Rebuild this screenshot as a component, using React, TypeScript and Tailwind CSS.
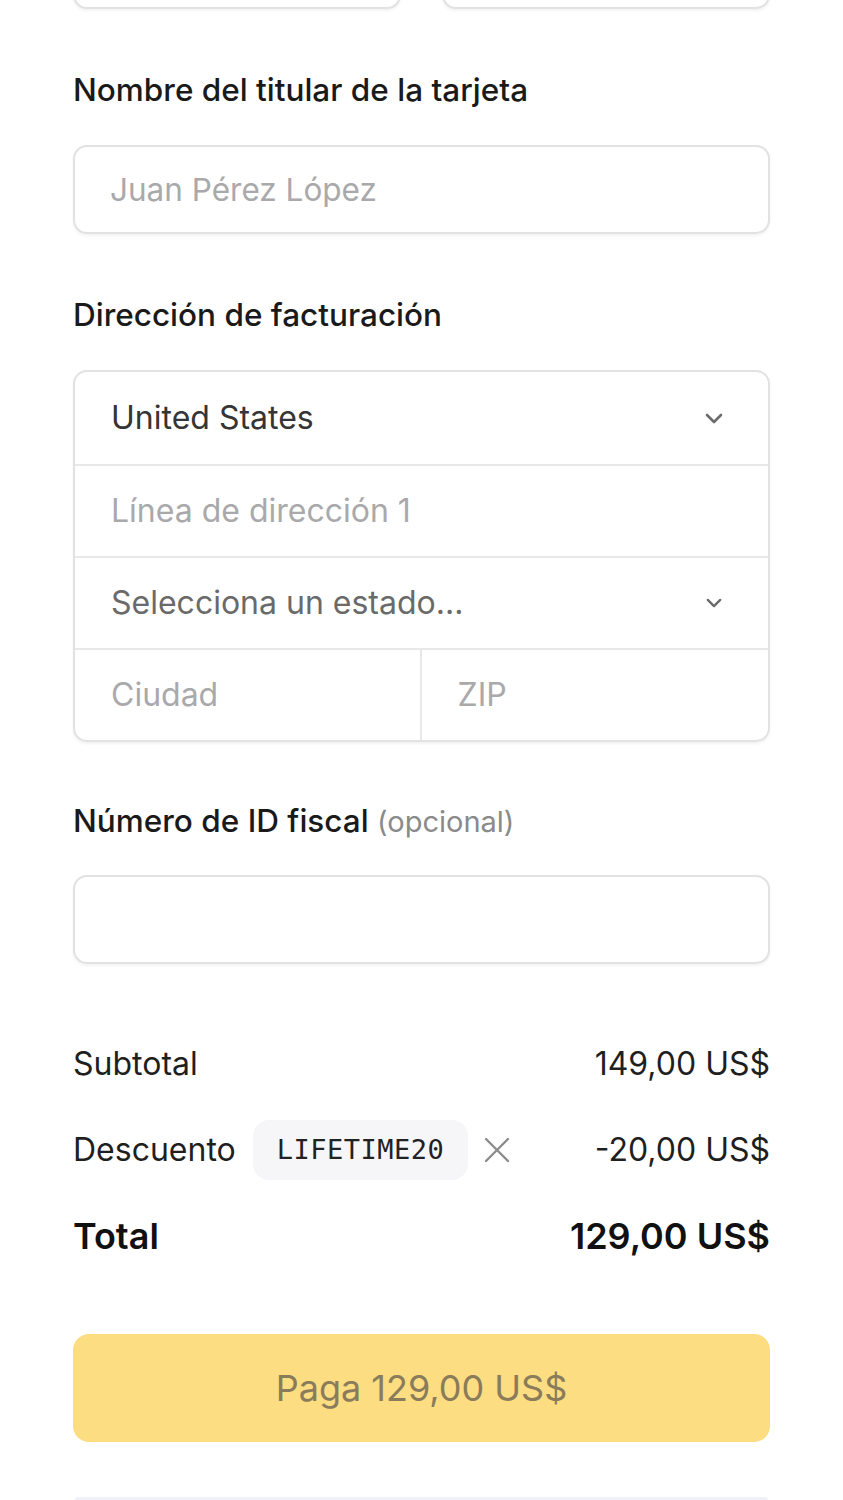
import React from "react";

const Chevron = ({ small }: { small?: boolean }) => (
  <svg
    width={small ? 16 : 18}
    height={small ? 10 : 11}
    viewBox="0 0 18 11"
    fill="none"
    stroke="#6b6b6b"
    strokeWidth={2.6}
    strokeLinecap="round"
    strokeLinejoin="round"
  >
    <path d="M2 2l7 7 7-7" />
  </svg>
);

export default function App() {
  return (
    <div
      className="min-h-[1500px] bg-white overflow-hidden"
      style={{ fontFamily: "Inter, 'Noto Sans', sans-serif" }}
    >
      <div className="mx-[73px]">
        {/* partial inputs at top */}
        <div className="grid grid-cols-2 gap-[41px] -mt-[81px]">
          <div className="h-[90px] rounded-[14px] border-2 border-[#e2e2e2] bg-white shadow-[0_2px_3px_rgba(0,0,0,0.05)]" />
          <div className="h-[90px] rounded-[14px] border-2 border-[#e2e2e2] bg-white shadow-[0_2px_3px_rgba(0,0,0,0.05)]" />
        </div>

        {/* Cardholder name */}
        <div className="mt-[62px] text-[31.5px] leading-[38px] font-medium text-[#1a1a1a]">
          Nombre del titular de la tarjeta
        </div>
        <div className="mt-[36px] h-[89px] rounded-[14px] border-2 border-[#e2e2e2] shadow-[0_2px_3px_rgba(0,0,0,0.05)] flex items-center px-[35px] text-[31.5px] text-[#a9a9ab]">
          Juan Pérez López
        </div>

        {/* Billing address */}
        <div className="mt-[62px] text-[31.5px] leading-[38px] font-medium text-[#1a1a1a]">
          Dirección de facturación
        </div>
        <div className="mt-[36px] rounded-[14px] border-2 border-[#e2e2e2] shadow-[0_2px_3px_rgba(0,0,0,0.05)] overflow-hidden">
          <div className="h-[92px] flex items-center justify-between pl-[36px] pr-[45px] text-[32px] text-[#353535]">
            <span>United States</span>
            <Chevron />
          </div>
          <div className="h-[92px] border-t-2 border-[#e8e8e8] flex items-center pl-[36px] text-[32px] text-[#a9a9ab]">
            Línea de dirección 1
          </div>
          <div className="h-[92px] border-t-2 border-[#e8e8e8] flex items-center justify-between pl-[36px] pr-[46px] text-[32px] text-[#6a6a6a]">
            <span>Selecciona un estado...</span>
            <Chevron small />
          </div>
          <div className="h-[92px] border-t-2 border-[#e8e8e8] grid grid-cols-2 text-[32px] text-[#a9a9ab]">
            <div className="flex items-center pl-[36px] border-r-2 border-[#e8e8e8]">Ciudad</div>
            <div className="flex items-center pl-[36px]">ZIP</div>
          </div>
        </div>

        {/* Tax ID */}
        <div className="mt-[60px] text-[31.5px] leading-[38px] font-medium text-[#1a1a1a]">
          Número de ID fiscal{" "}
          <span className="font-normal text-[#8a8a8a] text-[29px]">(opcional)</span>
        </div>
        <div className="mt-[34px] h-[89px] rounded-[14px] border-2 border-[#e2e2e2] shadow-[0_2px_3px_rgba(0,0,0,0.05)]" />

        {/* Summary */}
        <div className="mt-[81px] flex items-center justify-between text-[32px] leading-[38px] text-[#1f1f1f]">
          <span>Subtotal</span>
          <span>149,00 US$</span>
        </div>
        <div className="mt-[37px] flex items-center justify-between h-[60px] text-[32px] text-[#1f1f1f]">
          <div className="flex items-center">
            <span>Descuento</span>
            <span
              className="ml-[17px] h-[60px] flex items-center px-[24px] rounded-[16px] bg-[#f6f6f8] text-[27px] tracking-[0.5px] text-[#222]"
              style={{ fontFamily: "'DejaVu Sans Mono', 'Liberation Mono', monospace" }}
            >
              LIFETIME20
            </span>
            <svg
              className="ml-[16px]"
              width="26"
              height="26"
              viewBox="0 0 26 26"
              fill="none"
              stroke="#8c8c8c"
              strokeWidth={2.4}
              strokeLinecap="round"
            >
              <path d="M2 2l22 22M24 2L2 24" />
            </svg>
          </div>
          <span>-20,00 US$</span>
        </div>
        <div className="mt-[34px] flex items-center justify-between text-[36px] leading-[44px] font-semibold text-[#111]">
          <span>Total</span>
          <span>129,00 US$</span>
        </div>

        {/* Pay button */}
        <div className="mt-[76px] h-[108px] rounded-[16px] bg-[#fcdd82] flex items-center justify-center text-[36px] text-[#8a7c5a]">
          Paga 129,00 US$
        </div>

        <div className="mt-[55px] h-[3px] mx-[2px] rounded-t bg-[#eef2f8]" />
      </div>
    </div>
  );
}
